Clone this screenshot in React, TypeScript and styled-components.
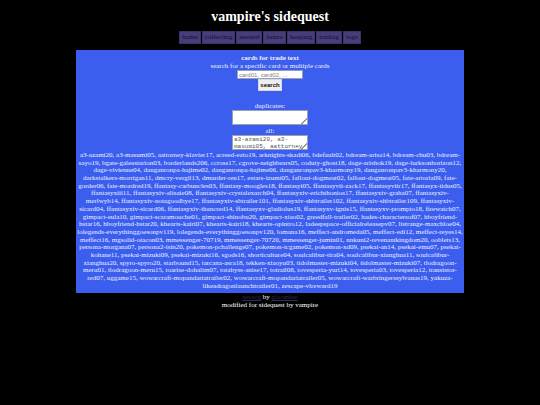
import React from "react";
import styled, { createGlobalStyle } from "styled-components";

const GlobalStyle = createGlobalStyle`
  * { box-sizing: border-box; }
  body {
    margin: 0;
    background: #000;
    color: #fff;
    font-family: "Liberation Serif", "Times New Roman", serif;
    font-size: 7px;
    line-height: 1.1;
    text-align: center;
  }
`;

const Page = styled.div`
  display: flex;
  flex-direction: column;
  align-items: center;
  padding-top: 9px;
`;

const Title = styled.h1`
  margin: 0 0 6px;
  font-size: 14px;
  line-height: 16px;
`;

const Nav = styled.nav`
  display: flex;
  gap: 1px;
  margin-bottom: 6px;
`;

const NavLink = styled.a`
  padding: 0 2px;
  border: 1px solid #3c3168;
  background: #483d7b;
  color: #130d2c;
  line-height: 11px;
  text-decoration: none;
`;

const Panel = styled.main`
  display: flex;
  flex-direction: column;
  align-items: center;
  width: 72%;
  padding: 4px 0 3px;
  background: #3b5eee;
  color: #eef0ff;
`;

const Heading = styled.h2`
  margin: 0;
  font-size: 7px;
  line-height: 8px;
`;

const SearchForm = styled.form`
  display: flex;
  flex-direction: column;
  align-items: center;
  margin-bottom: 11px;
`;

const Label = styled.label`
  line-height: 8px;
`;

const SearchInput = styled.input`
  width: 66px;
  height: 9px;
  padding: 0 1px;
  border: 1px solid #9a9fb5;
  background: #fff;
  font: 6px/7px "Liberation Sans", Arial, sans-serif;
  &::placeholder { color: #808080; opacity: 1; }
`;

const SearchButton = styled.button`
  height: 12px;
  padding: 0 1px;
  border: 1px solid #d8d8e0;
  background: #efefef;
  color: #111;
  font: bold 6px/8px "Liberation Sans", Arial, sans-serif;
`;

const CardBox = styled.textarea`
  display: block;
  width: 76px;
  height: 15px;
  margin-bottom: 2px;
  padding: 0 1px;
  border: 1px solid #9a9fb5;
  background: #fff;
  color: #555;
  font: 6px/7px "Liberation Mono", "Courier New", monospace;
  overflow: hidden;
  &::-webkit-resizer {
    background: linear-gradient(135deg, transparent 80%, #999 80%, #999 85%, transparent 85%);
  }
`;

const CardList = styled.p`
  margin: 0;
`;

const Footer = styled.footer`
  line-height: 8px;
`;

const FooterLink = styled.a`
  color: #302a58;
`;

const sections = ["home", "collecting", "needed", "future", "keeping", "trading", "logs"];

const cards = [
  "a3-azami20", "a3-masumi05", "aattorney-klavier17", "acreed-ezio19", "arknights-skadi06",
  "bdefault02", "bdream-arisa14", "bdream-chu03", "bdream-sayo19", "bgate-galeastarion03",
  "borderlands206", "ccross17", "cgrove-neighbears05", "coduty-ghost18", "dage-arishok19",
  "dage-lurksonhorizon12", "dage-vivienne04", "danganronpa-hajime02", "danganronpa-hajime06",
  "danganronpav3-kharmony19", "danganronpav3-kharmony20", "darkstalkers-morrigan11",
  "dmcry-vergil13", "dmurder-ren17", "estars-izumi05", "fallout-dogmeat02", "fallout-dogmeat05",
  "fate-artoria09", "fate-gorder06", "fate-mordred19", "ffantasy-carbuncles03",
  "ffantasy-moogles18", "ffantasyi05", "ffantasyvii-zack17", "ffantasyviir17",
  "ffantasyx-tidus05", "ffantasyxiii11", "ffantasyxiv-alisaie08", "ffantasyxiv-crystalexarch04",
  "ffantasyxiv-erichthonios17", "ffantasyxiv-graha07", "ffantasyxiv-merlwyb14",
  "ffantasyxiv-notagoodbye17", "ffantasyxiv-sbtrailer101", "ffantasyxiv-shbtrailer102",
  "ffantasyxiv-shbtrailer109", "ffantasyxiv-sicard04", "ffantasyxiv-sicard06",
  "ffantasyxiv-thancred14", "ffantasyxv-gladiolus19", "ffantasyxv-ignis15",
  "ffantasyxv-prompto18", "firewatch07", "gimpact-eula10", "gimpact-scaramouche01",
  "gimpact-shinobu20", "gimpact-xiao02", "greedfall-trailer02", "hades-charactersof07",
  "hboyfriend-hstar16", "hboyfriend-hstar20", "khearts-kairi07", "khearts-kairi18",
  "khearts-opintro12", "ladeepspace-officialreleasepv07", "listrange-maxchloe04",
  "lolegends-everythinggoesonpv119", "lolegends-everythinggoesonpv120", "lomana16",
  "meffect-andromeda05", "meffect-edi12", "meffect-reyes14", "meffect16", "mgsolid-otacon03",
  "mmessenger-70719", "mmessenger-70720", "mmessenger-jumin01", "nnkuni2-revenantkingdom20",
  "ooblets13", "persona-morgana07", "persona2-isin20", "pokemon-pchallenge07",
  "pokemon-tcgame02", "pokemon-xd09", "psekai-an14", "psekai-emu07", "psekai-kohane11",
  "psekai-mizuki09", "psekai-mizuki16", "sgods16", "shorticulture04", "soulcalibur-tira04",
  "soulcalibur-xianghua11", "soulcalibur-xianghua20", "spyro-spyro20", "starbound15",
  "tarcana-asra18", "tekken-xiaoyu03", "tidolmaster-mizuki04", "tidolmaster-mizuki07",
  "tlodragoon-meru01", "tlodragoon-meru15", "toarise-dohalim07", "totabyss-anise17",
  "totrail08", "tovesperia-yuri14", "tovesperia03", "tovesperia12", "transistor-red07",
  "uggame15", "wowarcraft-mopandariatrailer02", "wowarcraft-mopandariatrailer05",
  "wowarcraft-warbringerssylvanas19", "yakuza-likeadragonlaunchtrailer01",
  "zescape-vlreward19",
].join(", ");

export default function App() {
  return (
    <>
      <GlobalStyle />
      <Page>
        <Title>vampire's sidequest</Title>
        <Nav>
          {sections.map((name) => (
            <NavLink key={name} href={`#${name}`}>{name}</NavLink>
          ))}
        </Nav>
        <Panel>
          <Heading>cards for trade text</Heading>
          <SearchForm onSubmit={(event: React.FormEvent) => event.preventDefault()}>
            <Label htmlFor="search">search for a specific card or multiple cards</Label>
            <SearchInput id="search" type="text" placeholder="card01, card02, ..." />
            <SearchButton type="submit">search</SearchButton>
          </SearchForm>
          <Label htmlFor="duplicates">duplicates:</Label>
          <CardBox id="duplicates" />
          <Label htmlFor="all">all:</Label>
          <CardBox id="all" defaultValue={cards} />
          <CardList>{cards}</CardList>
        </Panel>
        <Footer>
          <FooterLink href="#neotcg">neotcg</FooterLink> by <FooterLink href="#gloomlee">gloomlee</FooterLink>
          <br />
          modified for sidequest by vampire
        </Footer>
      </Page>
    </>
  );
}
